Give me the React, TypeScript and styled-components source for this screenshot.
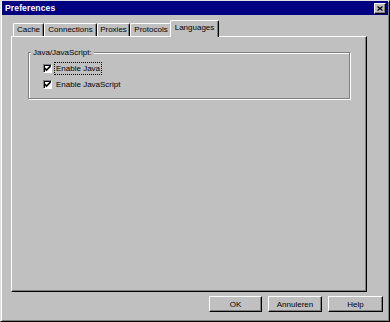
import React from 'react';
import styled, { createGlobalStyle } from 'styled-components';

const Global = createGlobalStyle`
  html, body { margin: 0; padding: 0; background: #c0c0c0; }
  body { font-family: "Liberation Sans", Arial, sans-serif; }
`;

const Window = styled.div`
  box-sizing: border-box;
  width: 390px;
  height: 322px;
  background: #c0c0c0;
  border: 1px solid;
  border-color: #dfdfdf #000 #000 #dfdfdf;
  box-shadow: inset 1px 1px #fff, inset -1px -1px #808080;
  padding: 0 1px 1px 1px;
  display: flex;
  flex-direction: column;
  font-family: "Liberation Sans", Arial, sans-serif;
  font-size: 8px;
  color: #000;
`;

const TitleBar = styled.div`
  height: 14px;
  flex: none;
  background: #000080;
  display: flex;
  align-items: center;
  justify-content: space-between;
  padding: 0 2px 0 3px;
  color: #fff;
  font-weight: 600;
  font-size: 8.6px;
  letter-spacing: 0.1px;
`;

const CloseButton = styled.div`
  box-sizing: border-box;
  width: 12px;
  height: 11px;
  background: #c0c0c0;
  border: 1px solid;
  border-color: #fff #000 #000 #fff;
  box-shadow: inset -1px -1px #808080;
  display: flex;
  align-items: center;
  justify-content: center;
`;

const Body = styled.div`
  flex: 1;
  display: flex;
  flex-direction: column;
  padding: 5px 5px 0 9px;
`;

const TabStrip = styled.div`
  display: flex;
  align-items: flex-end;
  height: 16px;
  margin-left: 2px;
  position: relative;
  z-index: 1;
`;

const Tab = styled.div<{ $w: number; $active?: boolean }>`
  box-sizing: border-box;
  width: ${p => p.$w}px;
  height: ${p => (p.$active ? 17 : 13)}px;
  margin: ${p => (p.$active ? '0 -2px -1px -2px' : '0')};
  position: relative;
  z-index: ${p => (p.$active ? 2 : 1)};
  background: #c0c0c0;
  border-top: 1px solid #fff;
  border-left: 1px solid #fff;
  border-right: 1px solid #000;
  box-shadow: inset -1px 0 #808080;
  border-radius: 2px 2px 0 0;
  display: flex;
  align-items: ${p => (p.$active ? 'flex-start' : 'center')};
  padding-top: ${p => (p.$active ? '2px' : '0')};
  justify-content: center;
  white-space: nowrap;
  line-height: 10px;
`;

const Panel = styled.div`
  box-sizing: border-box;
  width: 356px;
  height: 256px;
  flex: none;
  border-top: 1px solid #fff;
  border-left: 1px solid #fff;
  border-right: 1px solid #000;
  border-bottom: 1px solid #000;
  box-shadow: inset -1px -1px #808080;
  padding: 10px 0 0 16px;
`;

const GroupBox = styled.fieldset`
  box-sizing: border-box;
  width: 322px;
  margin: 0;
  padding: 0 0 7px 0;
  border: 1px solid #808080;
  box-shadow: inset 1px 1px #fff, 1px 1px #fff;
  min-inline-size: 0;
`;

const GroupLabel = styled.legend`
  margin-left: 2px;
  padding: 0 2px;
  font-size: 8px;
  line-height: 11px;
  background: #c0c0c0;
`;

const CheckList = styled.div`
  display: flex;
  flex-direction: column;
  gap: 3px;
  margin-top: 4px;
  padding-left: 14px;
`;

const CheckRow = styled.label`
  display: flex;
  align-items: center;
  height: 13px;
`;

const CheckBox = styled.span`
  box-sizing: border-box;
  width: 9px;
  height: 9px;
  background: #fff;
  border: 1px solid;
  border-color: #808080 #fff #fff #808080;
  box-shadow: inset 1px 1px #000;
  display: flex;
  align-items: center;
  justify-content: center;
`;

const CheckText = styled.span<{ $focus?: boolean }>`
  margin-left: 2px;
  padding: 0 1px;
  line-height: 11px;
  border: 1px dotted ${p => (p.$focus ? '#000' : 'transparent')};
  white-space: nowrap;
`;

const ButtonRow = styled.div`
  display: flex;
  justify-content: flex-end;
  gap: 6px;
  margin-top: 4px;
`;

const Button = styled.button<{ $w: number }>`
  box-sizing: border-box;
  width: ${p => p.$w}px;
  height: 16px;
  padding: 0;
  background: #c0c0c0;
  border: 1px solid;
  border-color: #fff #000 #000 #fff;
  box-shadow: inset -1px -1px #808080;
  font-family: inherit;
  font-size: 8px;
  color: #000;
`;

const Check = () => (
  <svg width="7" height="7" viewBox="0 0 7 7">
    <path d="M0.5 3 L2.5 5 L6.5 1" stroke="#000" strokeWidth="1.6" fill="none" />
  </svg>
);

const tabs = [
  { label: 'Cache', w: 31 },
  { label: 'Connections', w: 53 },
  { label: 'Proxies', w: 33 },
  { label: 'Protocols', w: 42 },
  { label: 'Languages', w: 49, active: true },
];

export default function App() {
  return (
    <>
      <Global />
      <Window>
        <TitleBar>
          <span>Preferences</span>
          <CloseButton>
            <svg width="6" height="5" viewBox="0 0 6 5">
              <path d="M0.5 0.5 L5.5 4.5 M5.5 0.5 L0.5 4.5" stroke="#000" strokeWidth="1.3" />
            </svg>
          </CloseButton>
        </TitleBar>
        <Body>
          <TabStrip>
            {tabs.map(t => (
              <Tab key={t.label} $w={t.w} $active={t.active}>
                {t.label}
              </Tab>
            ))}
          </TabStrip>
          <Panel>
            <GroupBox>
              <GroupLabel>Java/JavaScript:</GroupLabel>
              <CheckList>
                <CheckRow>
                  <CheckBox><Check /></CheckBox>
                  <CheckText $focus>Enable Java</CheckText>
                </CheckRow>
                <CheckRow>
                  <CheckBox><Check /></CheckBox>
                  <CheckText>Enable JavaScript</CheckText>
                </CheckRow>
              </CheckList>
            </GroupBox>
          </Panel>
          <ButtonRow>
            <Button $w={53}>OK</Button>
            <Button $w={54}>Annuleren</Button>
            <Button $w={55}>Help</Button>
          </ButtonRow>
        </Body>
      </Window>
    </>
  );
}
